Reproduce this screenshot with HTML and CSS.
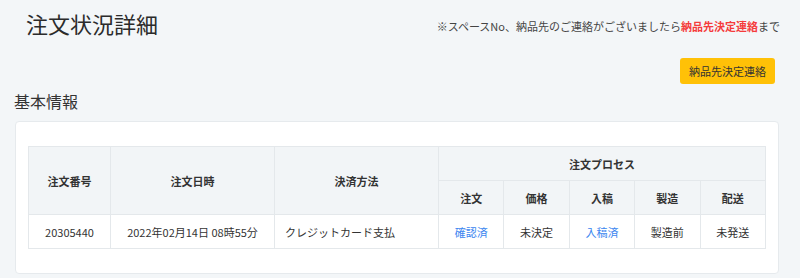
FILE: index.html
```html
<!DOCTYPE html>
<html lang="ja">
<head>
    <meta charset="UTF-8">
    <meta name="viewport" content="width=device-width, initial-scale=1.0">
    <title>注文状況詳細</title>
    <link rel="stylesheet" href="styles.css">
</head>
<body>
    <div class="page">
        <div class="top">
            <h1 class="title">注文状況詳細</h1>
            <p class="notice">※スペースNo、納品先のご連絡がございましたら<strong class="accent">納品先決定連絡</strong>まで</p>
        </div>
        <div class="actions">
            <button class="btn-warning">納品先決定連絡</button>
        </div>
        <h2 class="section-title">基本情報</h2>
        <div class="card">
            <table class="order-table">
                <colgroup>
                    <col style="width: 82px">
                    <col style="width: 164px">
                    <col style="width: 164px">
                    <col><col><col><col><col>
                </colgroup>
                <thead>
                    <tr>
                        <th rowspan="2">注文番号</th>
                        <th rowspan="2">注文日時</th>
                        <th rowspan="2">決済方法</th>
                        <th colspan="5">注文プロセス</th>
                    </tr>
                    <tr>
                        <th>注文</th>
                        <th>価格</th>
                        <th>入稿</th>
                        <th>製造</th>
                        <th>配送</th>
                    </tr>
                </thead>
                <tbody>
                    <tr>
                        <td>20305440</td>
                        <td>2022年02月14日 08時55分</td>
                        <td class="text-left">クレジットカード支払</td>
                        <td><a href="#" class="link">確認済</a></td>
                        <td>未決定</td>
                        <td><a href="#" class="link">入稿済</a></td>
                        <td>製造前</td>
                        <td>未発送</td>
                    </tr>
                </tbody>
            </table>
        </div>
    </div>
</body>
</html>
```

FILE: styles.css
```css
body {
    margin: 0;
    background-color: #f3f6f8;
    font-family: "Noto Sans CJK JP", "Noto Sans", sans-serif;
    color: #333;
}
.page {
    padding: 0 21px 0 15px;
}
.top {
    display: flex;
    justify-content: space-between;
    align-items: flex-start;
}
.title {
    margin: 8px 0 0 11px;
    font-size: 22px;
    line-height: 30px;
    font-weight: normal;
    color: #2b2b2b;
}
.notice {
    margin: 18px -1px 0 0;
    font-size: 11px;
    line-height: 16px;
    color: #444;
}
.accent {
    color: #f53b3b;
    font-weight: bold;
}
.actions {
    display: flex;
    justify-content: flex-end;
    margin-top: 20px;
}
.btn-warning {
    height: 26px;
    margin-right: 4px;
    padding: 0 9px;
    background-color: #ffc107;
    border: none;
    border-radius: 3px;
    font-family: inherit;
    font-size: 11px;
    color: #333;
    cursor: pointer;
}
.section-title {
    margin: 6px 0 9px -1px;
    font-size: 16px;
    line-height: 22px;
    font-weight: normal;
    color: #333;
}
.card {
    background-color: #fff;
    border: 1px solid #e6eaed;
    border-radius: 4px;
    padding: 24px 12px;
}
.order-table {
    width: 100%;
    border-collapse: collapse;
    table-layout: fixed;
    font-size: 11px;
}
.order-table th,
.order-table td {
    height: 33px;
    padding: 0 10px;
    border: 1px solid #e4e8eb;
    text-align: center;
    vertical-align: middle;
}
.order-table th {
    background-color: #f2f5f7;
    font-weight: bold;
    color: #333;
}
.order-table td {
    color: #333;
}
.order-table td.text-left {
    text-align: left;
}
.link {
    color: #3b86f0;
    text-decoration: none;
}
```
